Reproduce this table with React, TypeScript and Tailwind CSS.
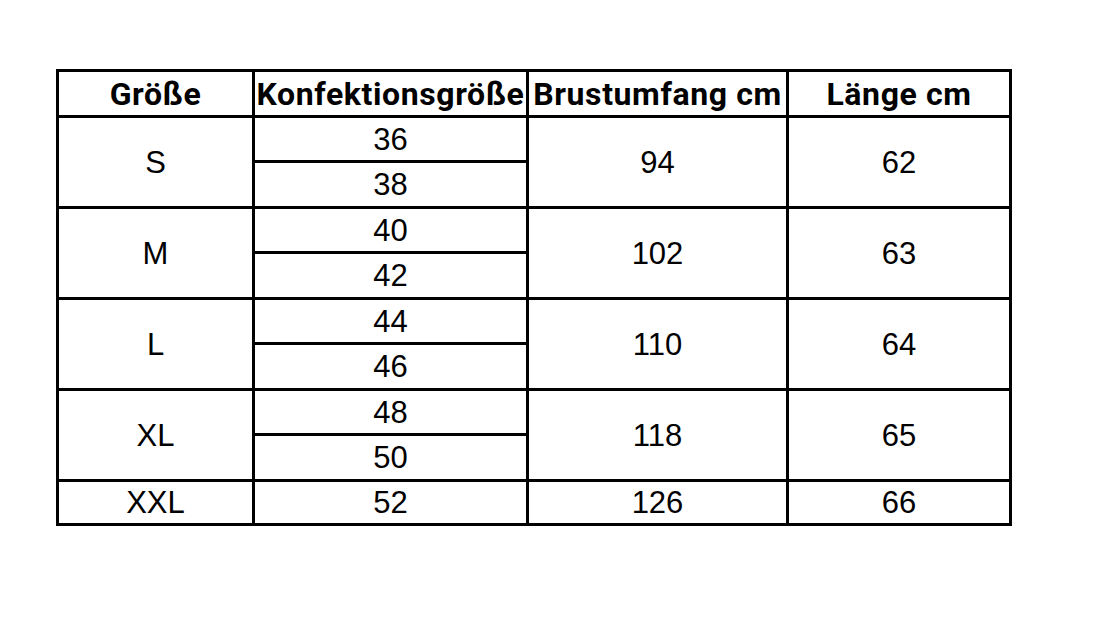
import React from 'react';

type SizeRow = {
  size: string;
  konf: string[];
  brust: string;
  laenge: string;
};

const rows: SizeRow[] = [
  { size: 'S', konf: ['36', '38'], brust: '94', laenge: '62' },
  { size: 'M', konf: ['40', '42'], brust: '102', laenge: '63' },
  { size: 'L', konf: ['44', '46'], brust: '110', laenge: '64' },
  { size: 'XL', konf: ['48', '50'], brust: '118', laenge: '65' },
  { size: 'XXL', konf: ['52'], brust: '126', laenge: '66' },
];

const headFont = { fontFamily: '"Roboto", "Liberation Sans", sans-serif' };

const App: React.FC = () => {
  const cell = 'border-[3px] border-black text-center align-middle p-0 leading-none';
  const headCell = `${cell} font-bold text-[32px] tracking-[0.6px] h-[46px] whitespace-nowrap`;

  const rowHeight = (count: number, i: number) => {
    if (count === 1) return 'h-[44px]';
    return i === 0 ? 'h-[45px]' : 'h-[46px]';
  };

  return (
    <div className="w-[1100px] h-[635px] bg-white pt-[69px] pl-[56px]" style={{ fontFamily: '"Liberation Sans", Arial, sans-serif' }}>
      <table className="border-collapse text-black table-fixed w-[953px]">
        <colgroup>
          <col className="w-[196px]" />
          <col className="w-[274px]" />
          <col className="w-[260px]" />
          <col className="w-[223px]" />
        </colgroup>
        <thead>
          <tr>
            <th className={headCell} style={headFont}>Größe</th>
            <th className={headCell} style={headFont}>Konfektionsgröße</th>
            <th className={headCell} style={headFont}>Brustumfang cm</th>
            <th className={headCell} style={headFont}>Länge cm</th>
          </tr>
        </thead>
        <tbody className="text-[31px]">
          {rows.map((r) =>
            r.konf.map((k, i) => (
              <tr key={r.size + k} className={rowHeight(r.konf.length, i)}>
                {i === 0 && (
                  <td rowSpan={r.konf.length} className={cell}>
                    {r.size}
                  </td>
                )}
                <td className={cell}>{k}</td>
                {i === 0 && (
                  <>
                    <td rowSpan={r.konf.length} className={cell}>
                      {r.brust}
                    </td>
                    <td rowSpan={r.konf.length} className={cell}>
                      {r.laenge}
                    </td>
                  </>
                )}
              </tr>
            ))
          )}
        </tbody>
      </table>
    </div>
  );
};

export default App;
